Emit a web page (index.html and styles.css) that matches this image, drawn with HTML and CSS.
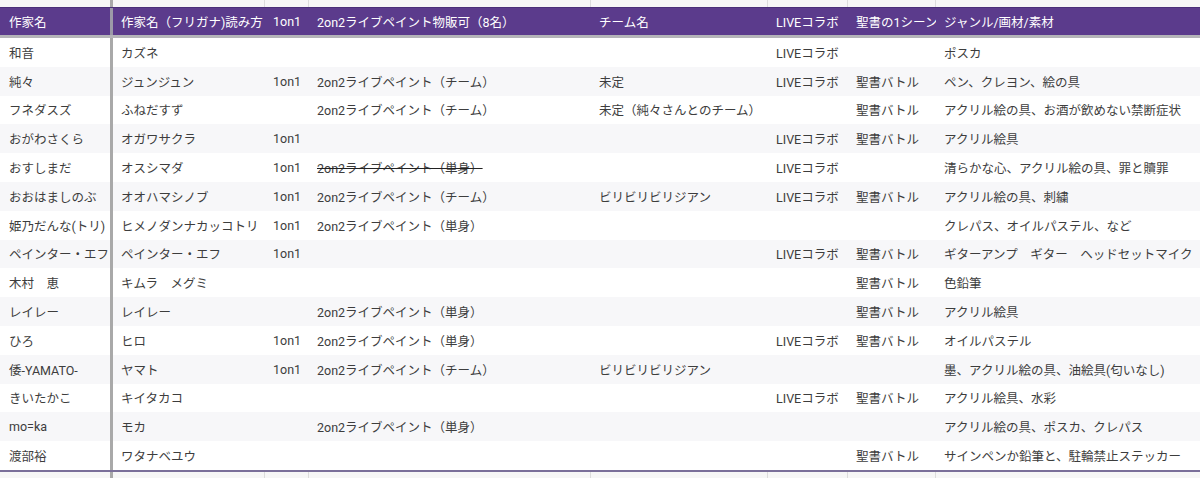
FILE: index.html
```html
<!DOCTYPE html>
<html lang="ja">
<head>
<meta charset="utf-8">
<title>作家一覧</title>
<link rel="stylesheet" href="styles.css">
</head>
<body>
<div class="sheet">
  <div class="row band">
    <div class="c"></div><div class="c"></div><div class="c"></div><div class="c"></div><div class="c"></div><div class="c"></div><div class="c"></div><div class="c"></div>
  </div>
  <div class="row head">
    <div class="c">作家名</div><div class="c">作家名（フリガナ)読み方</div><div class="c">1on1</div><div class="c">2on2ライブペイント物販可（8名）</div><div class="c">チーム名</div><div class="c">LIVEコラボ</div><div class="c">聖書の1シーン</div><div class="c">ジャンル/画材/素材</div>
  </div>
  <div class="body">
    <div class="row"><div class="c">和音</div><div class="c">カズネ</div><div class="c"></div><div class="c"></div><div class="c"></div><div class="c">LIVEコラボ</div><div class="c"></div><div class="c">ポスカ</div></div>
    <div class="row"><div class="c">純々</div><div class="c">ジュンジュン</div><div class="c">1on1</div><div class="c">2on2ライブペイント（チーム）</div><div class="c">未定</div><div class="c">LIVEコラボ</div><div class="c">聖書バトル</div><div class="c">ペン、クレヨン、絵の具</div></div>
    <div class="row"><div class="c">フネダスズ</div><div class="c">ふねだすず</div><div class="c"></div><div class="c">2on2ライブペイント（チーム）</div><div class="c">未定（純々さんとのチーム）</div><div class="c"></div><div class="c">聖書バトル</div><div class="c">アクリル絵の具、お酒が飲めない禁断症状</div></div>
    <div class="row"><div class="c">おがわさくら</div><div class="c">オガワサクラ</div><div class="c">1on1</div><div class="c"></div><div class="c"></div><div class="c">LIVEコラボ</div><div class="c">聖書バトル</div><div class="c">アクリル絵具</div></div>
    <div class="row"><div class="c">おすしまだ</div><div class="c">オスシマダ</div><div class="c">1on1</div><div class="c"><s class="strike">2on2ライブペイント（単身）</s></div><div class="c"></div><div class="c">LIVEコラボ</div><div class="c"></div><div class="c">清らかな心、アクリル絵の具、罪と贖罪</div></div>
    <div class="row"><div class="c">おおはましのぶ</div><div class="c">オオハマシノブ</div><div class="c">1on1</div><div class="c">2on2ライブペイント（チーム）</div><div class="c">ビリビリビリジアン</div><div class="c">LIVEコラボ</div><div class="c">聖書バトル</div><div class="c">アクリル絵の具、刺繍</div></div>
    <div class="row"><div class="c">姫乃だんな(トリ)</div><div class="c">ヒメノダンナカッコトリ</div><div class="c">1on1</div><div class="c">2on2ライブペイント（単身）</div><div class="c"></div><div class="c"></div><div class="c"></div><div class="c">クレパス、オイルパステル、など</div></div>
    <div class="row"><div class="c">ペインター・エフ</div><div class="c">ペインター・エフ</div><div class="c">1on1</div><div class="c"></div><div class="c"></div><div class="c">LIVEコラボ</div><div class="c">聖書バトル</div><div class="c">ギターアンプ　ギター　ヘッドセットマイク</div></div>
    <div class="row"><div class="c">木村　恵</div><div class="c">キムラ　メグミ</div><div class="c"></div><div class="c"></div><div class="c"></div><div class="c"></div><div class="c">聖書バトル</div><div class="c">色鉛筆</div></div>
    <div class="row"><div class="c">レイレー</div><div class="c">レイレー</div><div class="c"></div><div class="c">2on2ライブペイント（単身）</div><div class="c"></div><div class="c"></div><div class="c">聖書バトル</div><div class="c">アクリル絵具</div></div>
    <div class="row"><div class="c">ひろ</div><div class="c">ヒロ</div><div class="c">1on1</div><div class="c">2on2ライブペイント（単身）</div><div class="c"></div><div class="c">LIVEコラボ</div><div class="c">聖書バトル</div><div class="c">オイルパステル</div></div>
    <div class="row"><div class="c">倭-YAMATO-</div><div class="c">ヤマト</div><div class="c">1on1</div><div class="c">2on2ライブペイント（チーム）</div><div class="c">ビリビリビリジアン</div><div class="c"></div><div class="c"></div><div class="c">墨、アクリル絵の具、油絵具(匂いなし)</div></div>
    <div class="row"><div class="c">きいたかこ</div><div class="c">キイタカコ</div><div class="c"></div><div class="c"></div><div class="c"></div><div class="c">LIVEコラボ</div><div class="c">聖書バトル</div><div class="c">アクリル絵具、水彩</div></div>
    <div class="row"><div class="c">mo=ka</div><div class="c">モカ</div><div class="c"></div><div class="c">2on2ライブペイント（単身）</div><div class="c"></div><div class="c"></div><div class="c"></div><div class="c">アクリル絵の具、ポスカ、クレパス</div></div>
    <div class="row"><div class="c">渡部裕</div><div class="c">ワタナベユウ</div><div class="c"></div><div class="c"></div><div class="c"></div><div class="c"></div><div class="c">聖書バトル</div><div class="c">サインペンか鉛筆と、駐輪禁止ステッカー</div></div>
  </div>
  <div class="row band foot">
    <div class="c"></div><div class="c"></div><div class="c"></div><div class="c"></div><div class="c"></div><div class="c"></div><div class="c"></div><div class="c"></div>
  </div>
</div>
</body>
</html>
```

FILE: styles.css
```css
* { box-sizing: border-box; }
html, body { margin: 0; padding: 0; background: #ffffff; }
body {
  width: 1200px;
  height: 478px;
  overflow: hidden;
  font-family: Roboto, "Noto Sans CJK JP", sans-serif;
  font-size: 12.5px;
  color: #3d3d3d;
}
.sheet { display: flex; flex-direction: column; }
.row {
  display: grid;
  grid-template-columns: 113px 152px 44px 282px 177px 80px 88px 1fr;
  height: 28.8px;
  align-items: stretch;
}
.c {
  padding: 0 8px;
  display: flex;
  align-items: center;
  white-space: nowrap;
  overflow: hidden;
}
.row .c:first-child {
  padding-left: 9px;
  border-right: 3px solid #a9a9a9;
}
.body .row:nth-child(odd) { background: #ffffff; }
.body .row:nth-child(even) { background: #f7f7f9; }
.band { height: 7px; background: #f6f6f6; }
.band .c { border-right: 1px solid #dcdcdc; }
.band .c:last-child { border-right: none; }
.foot { height: 10px; border-top: 2px solid #7a6f99; }
.head {
  height: 31px;
  background: #5b3b8c;
  color: #ffffff;
  border-bottom: 3px solid #b4b4b8;
  border-top: 1px solid #4a2f78;
}
.head .c:first-child { border-right-color: #9c9aa8; }
.strike { text-decoration: line-through; text-decoration-color: #222; }
```
